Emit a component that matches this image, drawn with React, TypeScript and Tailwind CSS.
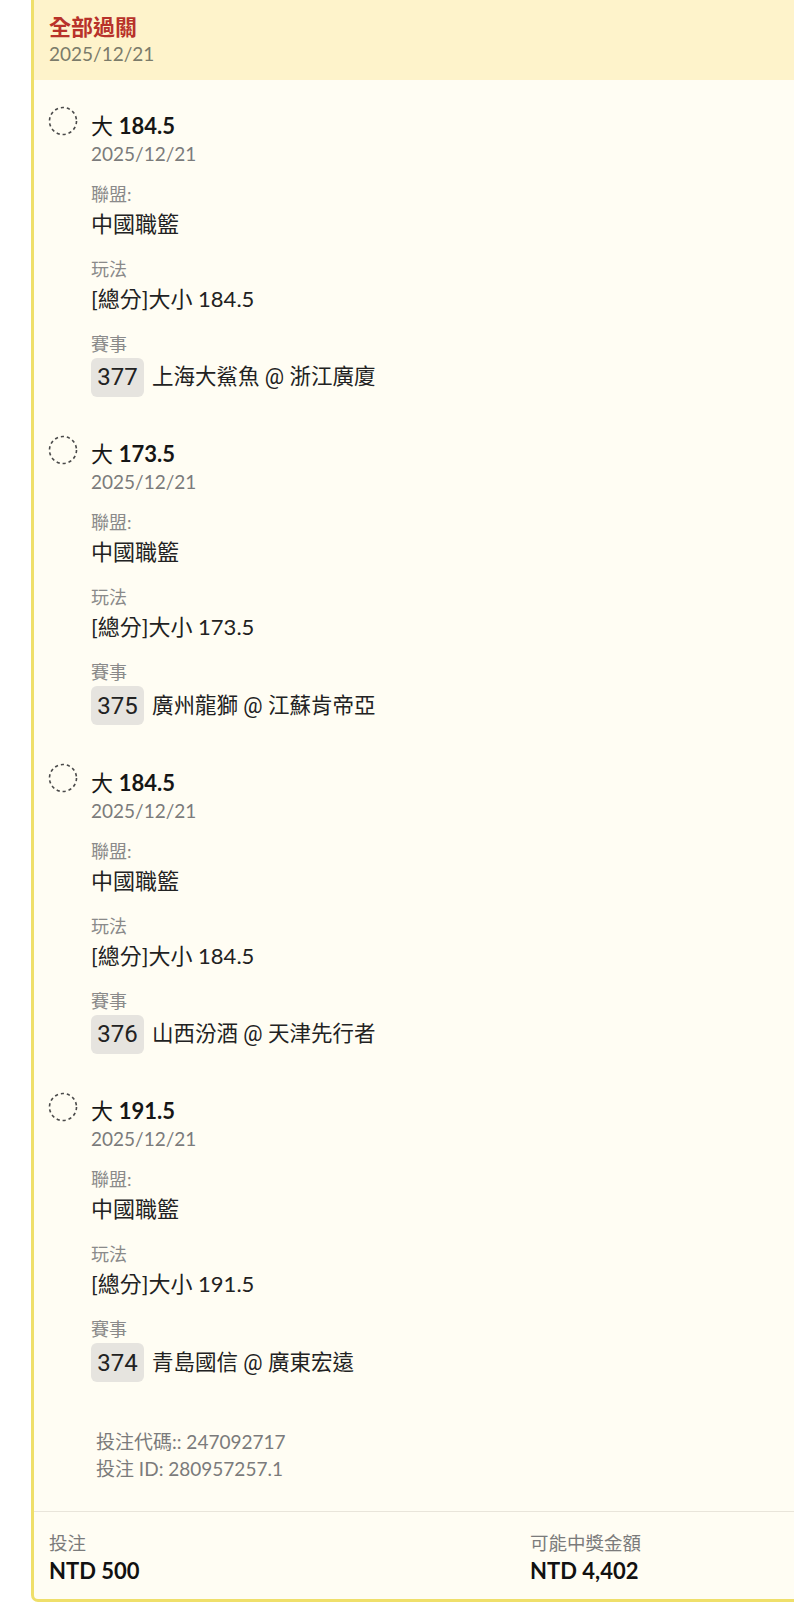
import React from "react";

const latin = "font-['Lato','Noto_Sans_CJK_TC',sans-serif]";

type Bet = { pick: string; play: string; no: string; match: string };

const bets: Bet[] = [
  { pick: "184.5", play: "[總分]大小 184.5", no: "377", match: "上海大鯊魚 @ 浙江廣廈" },
  { pick: "173.5", play: "[總分]大小 173.5", no: "375", match: "廣州龍獅 @ 江蘇肯帝亞" },
  { pick: "184.5", play: "[總分]大小 184.5", no: "376", match: "山西汾酒 @ 天津先行者" },
  { pick: "191.5", play: "[總分]大小 191.5", no: "374", match: "青島國信 @ 廣東宏遠" },
];

function DashedCircle() {
  return (
    <svg width="30" height="30" viewBox="0 0 30 30" className="shrink-0">
      <circle cx="15" cy="15" r="13.5" fill="none" stroke="#4a4a4a" strokeWidth="1.6" strokeDasharray="3.2 2.9" />
    </svg>
  );
}

function Item({ b }: { b: Bet }) {
  return (
    <div className="flex">
      <div className="w-[30px] -mt-[5.5px]">
        <DashedCircle />
      </div>
      <div className="ml-[13px] flex flex-col">
        <div className="text-[22px] leading-[28px] text-[#161616]">
          <span className="font-normal">大</span> <span className="font-bold">{b.pick}</span>
        </div>
        <div className="text-[19px] leading-[28px] text-[#7b7b7b]">2025/12/21</div>

        <div className="mt-[14px] text-[18px] leading-[24px] text-[#8a8a8a]">聯盟:</div>
        <div className="mt-[4px] text-[22px] leading-[28px] text-[#222]">中國職籃</div>

        <div className="mt-[19px] text-[18px] leading-[24px] text-[#8a8a8a]">玩法</div>
        <div className="mt-[4px] text-[22px] leading-[28px] text-[#222]">{b.play}</div>

        <div className="mt-[19px] text-[18px] leading-[24px] text-[#8a8a8a]">賽事</div>
        <div className="mt-[2px] flex items-center">
          <div className="h-[39px] w-[53px] rounded-[6px] bg-[#e6e4df] flex items-center justify-center text-[24px] text-[#222] font-['Roboto',sans-serif]">
            {b.no}
          </div>
          <div className="ml-[8px] text-[21.5px] leading-[28px] text-[#222] font-['Roboto','Noto_Sans_CJK_TC',sans-serif]">
            {b.match}
          </div>
        </div>
      </div>
    </div>
  );
}

export default function App() {
  return (
    <div className={`w-[794px] h-[1623px] overflow-hidden bg-white ${latin}`}>
      <div className="ml-[31px] w-[1000px] border-l-[3px] border-b-[3px] border-r-[3px] border-[#efdf6a] rounded-b-[7px] bg-[#fffdf3] overflow-hidden">
        {/* Header */}
        <div className="h-[80px] bg-[#fef3cb] pl-[15px] pt-[13px]">
          <div className="text-[22px] leading-[28px] font-bold text-[#b8322a]">全部過關</div>
          <div className="text-[19px] leading-[26px] text-[#7b7b6a]">2025/12/21</div>
        </div>

        {/* Items */}
        <div className="pl-[14px] pt-[31.5px] flex flex-col gap-[43.5px]">
          {bets.map((b, i) => (
            <Item key={i} b={b} />
          ))}
        </div>

        {/* codes */}
        <div className="pl-[62px] pt-[46px] pb-[29px] text-[19px] leading-[27px] text-[#7b7b7b]">
          <div>投注代碼:: 247092717</div>
          <div>投注 ID: 280957257.1</div>
        </div>

        <div className="h-px bg-[#e9e5da]" />

        {/* Footer */}
        <div className="flex pl-[15px] pt-[19px] pb-[14px]">
          <div className="w-[481px]">
            <div className="text-[18.5px] leading-[24px] text-[#7b7b7b]">投注</div>
            <div className="mt-[2px] text-[22px] leading-[28px] font-bold text-[#111]">NTD 500</div>
          </div>
          <div>
            <div className="text-[18.5px] leading-[24px] text-[#7b7b7b]">可能中獎金額</div>
            <div className="mt-[2px] text-[22px] leading-[28px] font-bold text-[#111]">NTD 4,402</div>
          </div>
        </div>
      </div>
    </div>
  );
}
